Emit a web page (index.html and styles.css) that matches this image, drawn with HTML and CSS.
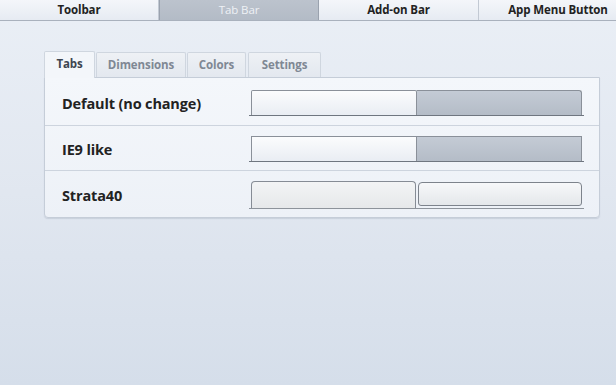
FILE: index.html
```html
<!DOCTYPE html>
<html>
<head>
<meta charset="utf-8">
<link rel="stylesheet" href="styles.css">
</head>
<body>
<div class="topbar">
  <div class="ttab">Toolbar</div>
  <div class="ttab sel">Tab Bar</div>
  <div class="ttab">Add-on Bar</div>
  <div class="ttab last">App Menu Button</div>
</div>
<div class="content">
  <div class="tabs">
    <div class="tab active">Tabs</div>
    <div class="tab t-dim">Dimensions</div>
    <div class="tab t-col">Colors</div>
    <div class="tab t-set">Settings</div>
  </div>
  <div class="panel">
    <div class="row">
      <div class="label">Default (no change)</div>
      <div class="preview">
        <div class="pt light def-l"></div>
        <div class="pt gray def-r"></div>
      </div>
    </div>
    <div class="row">
      <div class="label">IE9 like</div>
      <div class="preview">
        <div class="pt light"></div>
        <div class="pt gray"></div>
      </div>
    </div>
    <div class="row last">
      <div class="label">Strata40</div>
      <div class="preview strata">
        <div class="pt s1"></div>
        <div class="pt s2"></div>
      </div>
    </div>
  </div>
</div>
</body>
</html>
```
FILE: styles.css
```css
* { box-sizing: border-box; }
html, body { margin: 0; padding: 0; }
body {
  width: 616px;
  height: 385px;
  overflow: hidden;
  font-family: "Open Sans", "Noto Sans", sans-serif;
  background: linear-gradient(180deg, #eaeff6 0%, #e1e7f0 50%, #d5deea 100%);
}
.topbar {
  display: flex;
  height: 21px;
  overflow: hidden;
  border-bottom: 1px solid #a9b1bd;
  background: linear-gradient(180deg, #f4f6fa 0%, #e6ebf2 100%);
}
.ttab {
  width: 160px;
  flex-shrink: 0;
  font-size: 11.5px;
  font-weight: 700;
  color: #222;
  text-align: center;
  line-height: 20px;
  border-right: 1px solid #c2c9d3;
  letter-spacing: -0.1px;
}
.ttab:first-child { width: 159px; }
.ttab.last { width: 158px; border-right: none; }
.ttab.sel {
  background: linear-gradient(180deg, #bcc3cd 0%, #b3bbc6 100%);
  color: #eef1f5;
  font-weight: 400;
  border-left: 1px solid #9aa2ae;
  border-right: 1px solid #9aa2ae;
}
.content {
  padding: 30px 16px 0 44px;
}
.tabs {
  display: flex;
  height: 26px;
  align-items: flex-end;
}
.tab {
  height: 25px;
  font-size: 11.5px;
  font-weight: 700;
  color: #7f8894;
  line-height: 24px;
  text-align: center;
  border: 1px solid #cfd6df;
  border-bottom: none;
  border-radius: 2px 2px 0 0;
  background: linear-gradient(180deg, #eef1f5 0%, #e3e8ef 100%);
  letter-spacing: -0.1px;
}
.tab.active {
  width: 51px;
  height: 27px;
  margin-bottom: -1px;
  color: #3d4550;
  background: #f3f6fa;
  position: relative;
  z-index: 1;
}
.t-dim { width: 90px; margin-left: 1px; }
.t-col { width: 59px; margin-left: 1px; }
.t-set { width: 73px; margin-left: 2px; }
.panel {
  width: 556px;
  border: 1px solid #c5cdd8;
  border-radius: 0 0 4px 4px;
  background: linear-gradient(180deg, #f4f7fb 0%, #edf1f7 100%);
  box-shadow: 0 1px 1px rgba(150,160,175,0.3);
}
.row {
  display: flex;
  align-items: center;
  height: 45px;
  border-bottom: 1px solid #cdd4de;
  padding-left: 17px;
}
.row:first-child { height: 48px; }
.row.last { border-bottom: none; height: 46px; }
.label {
  width: 187px;
  font-size: 14.5px;
  font-weight: 700;
  color: #222;
  letter-spacing: -0.15px;
  padding-top: 3px;
}
.preview {
  display: flex;
  width: 335px;
  height: 26px;
  margin-top: 2px;
  padding: 0 2px 0 2px;
  border-bottom: 1px solid #6f7680;
  align-items: flex-end;
}
.pt {
  flex: 1;
  height: 25px;
  border: 1px solid #8a9099;
  border-bottom: none;
}
.pt.light {
  background: linear-gradient(180deg, #fbfcfd 0%, #e9edf3 100%);
}
.pt.gray {
  background: linear-gradient(180deg, #c4cbd5 0%, #b4bcc7 100%);
  border-left: none;
}
.def-l { border-radius: 2px 2px 0 0; }
.def-r { border-radius: 0 3px 0 0; }
.preview.strata {
  margin-top: 4px;
  border-bottom: 1px solid #8d939b;
  gap: 2px;
}
.pt.s1 {
  height: 27px;
  border-radius: 4px 4px 0 0;
  border-color: #868c95;
  background: linear-gradient(180deg, #f3f4f5 0%, #e6e8ea 100%);
}
.pt.s2 {
  height: 24px;
  margin-bottom: 2px;
  border-radius: 4px 4px 3px 3px;
  border: 1px solid #7d838c;
  background: linear-gradient(180deg, #f7f8fa 0%, #e4e7ea 100%);
}
```
